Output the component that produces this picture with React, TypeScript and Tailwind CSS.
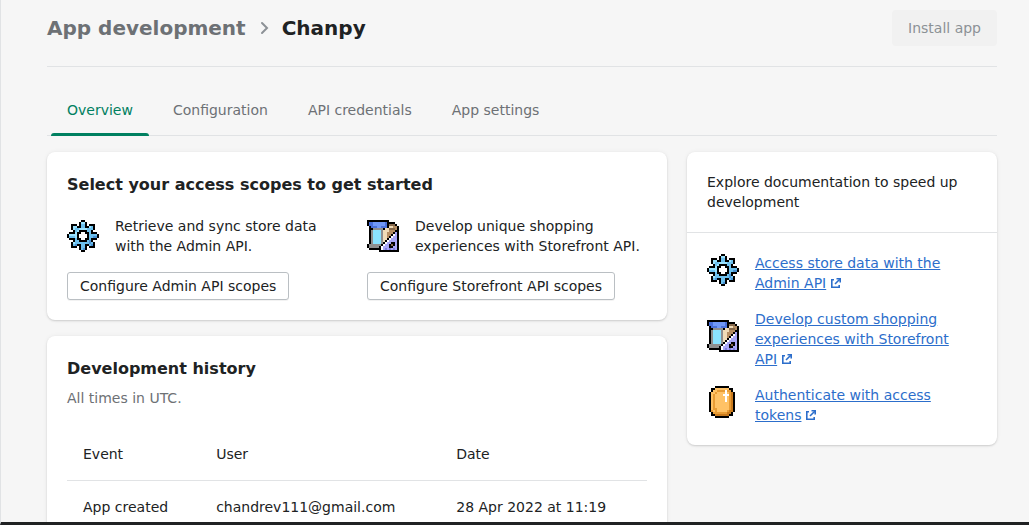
import React from 'react';

const GEAR = [
  '.......KK.......',
  '......KLLK......',
  '..KKK.KMMK.KKK..',
  '..KLLKKMMKKLMK..',
  '..KLMMLLLLMMMK..',
  '...KMLKKKKMMK...',
  '.KKKLKKWWKKMKKK.',
  'KLLLLKWWWWKMMMMK',
  'KMMMLKWWWWKMMDDK',
  '.KKKMKKWWKKMKKK.',
  '...KMMKKKKMDK...',
  '..KLMMMMMMMDMK..',
  '..KMDKKMMKKMDK..',
  '..KKK.KMMK.KKK..',
  '......KMDK......',
  '.......KK.......',
];

const STORE = [
  'KKKKKKKKKKK.....',
  'KBBVVVVVVBKKKK..',
  'KBBVVVVVVBKTTTK.',
  '.KBBBVVBBBKSSNNK',
  '.KKGGGGGKSSTTTNK',
  '.KGCCCCGSSSNNNKK',
  '.KGCCCCGSSNNNKPK',
  '.KGCCCCGSSNNKWPK',
  '.KGCCCCGSSNKWPPK',
  '.KGCCCCGSSKWPPPK',
  '.KGCCCCGSKWPPPPK',
  '.KGCCCCGKWPPKKPK',
  'KGGGGGGKWPPKTKPK',
  'KGGGGGKWPPPKKPPK',
  '.KKKKKKWPQPQPQPK',
  '......KKKKKKKKKK',
];

const COIN = [
  '....KKKKKKK.....',
  '..KKYYYYYYYKK...',
  '..KYYOOOOWOOK...',
  '.KYYOYYYYWYOAK..',
  '.KYOYYYYWWWOAK..',
  '.KYOYYYYYWYOAK..',
  '.KYOYYYYYWYOAK..',
  '.KYOYYYYYWYOAK..',
  '.KYOYYYYYYYOAK..',
  '.KYOYYYYYYYOAK..',
  '.KYOYYYYYYYOAK..',
  '.KYOOYYYYYYOAK..',
  '.KOYOYYYYYOAAK..',
  '..KOOOOOOOAAK...',
  '..KKAAAAAAAKK...',
  '....KKKKKKK.....',
];

const COLORS: Record<string, string> = {
  K: '#000000',
  W: '#ffffff',
  L: '#9be3ff',
  M: '#6cc0ee',
  D: '#4a92d4',
  B: '#4a70dc',
  V: '#7098f8',
  C: '#8ae3ff',
  G: '#8f8f8f',
  T: '#86694c',
  S: '#f0dcb8',
  N: '#b58e63',
  P: '#a8a6f6',
  Q: '#7f7ce0',
  Y: '#ffc266',
  O: '#e89c35',
  A: '#c97a1d',
};

function PixelIcon({ rows }: { rows: string[] }) {
  return (
    <svg viewBox="0 0 16 16" className="size-8 shrink-0" shapeRendering="crispEdges" aria-hidden="true">
      {rows.flatMap((row, y) =>
        row
          .split('')
          .map((c, x) => (c === '.' ? null : <rect key={`${x}-${y}`} x={x} y={y} width="1" height="1" fill={COLORS[c]} />)),
      )}
    </svg>
  );
}

function ExternalIcon() {
  return (
    <svg viewBox="0 0 12 12" className="ml-1 inline size-3 align-[-1px]" fill="none" stroke="currentColor" strokeWidth="1.6" aria-hidden="true">
      <path d="M4 2.8H1.8v7.4h7.4V8" />
      <path d="M5 7L9.8 2.2" />
      <path d="M6.5 1.8h3.7v3.7" />
    </svg>
  );
}

const tabs = ['Overview', 'Configuration', 'API credentials', 'App settings'];

const scopes = [
  { icon: GEAR, text: 'Retrieve and sync store data with the Admin API.', action: 'Configure Admin API scopes' },
  { icon: STORE, text: 'Develop unique shopping experiences with Storefront API.', action: 'Configure Storefront API scopes' },
];

const docs = [
  { icon: GEAR, text: 'Access store data with the Admin API' },
  { icon: STORE, text: 'Develop custom shopping experiences with Storefront API' },
  { icon: COIN, text: 'Authenticate with access tokens' },
];

const card = 'rounded-lg bg-white shadow-[0_0_5px_rgba(23,24,24,0.05),0_1px_2px_rgba(0,0,0,0.15)]';

export default function App() {
  return (
    <div className="h-screen overflow-hidden border-b-3 border-l border-b-[#202223] border-l-[#e1e3e5] bg-[#f6f6f6] pr-8 pl-[46px] font-['DejaVu_Sans',sans-serif] text-sm leading-5 text-[#202223]">
      <header className="flex items-center justify-between border-b border-[#e1e3e5] pt-[10px] pb-5">
        <h1 className="flex items-center text-xl leading-7 font-bold">
          <a href="#apps" className="text-[#6d7175]">App development</a>
          <svg viewBox="0 0 20 20" className="mx-2 size-5" fill="none" stroke="#8c9196" strokeWidth="2" strokeLinecap="round" aria-hidden="true">
            <path d="M8 5l5 5-5 5" />
          </svg>
          <span>Chanpy</span>
        </h1>
        <button disabled className="h-9 rounded bg-[#f1f1f1] px-4 text-[#8c9196]">Install app</button>
      </header>

      <nav className="mt-[18px] flex border-b border-[#e1e3e5] px-1" aria-label="App sections">
        {tabs.map((tab, i) => (
          <a
            key={tab}
            href={`#${tab.toLowerCase().replace(' ', '-')}`}
            aria-current={i === 0 ? 'page' : undefined}
            className={
              i === 0
                ? 'relative mr-2 px-4 pt-[15px] pb-[15px] text-[#008060] after:absolute after:inset-x-0 after:-bottom-px after:h-[3px] after:rounded-t after:bg-[#008060]'
                : 'mr-2 px-4 pt-[15px] pb-[15px] text-[#6d7175]'
            }
          >
            {tab}
          </a>
        ))}
      </nav>

      <main className="mt-4 grid grid-cols-[2fr_1fr] items-start gap-5">
        <div className="flex flex-col gap-4">
          <section className={`${card} p-5`}>
            <h2 className="text-base leading-[26px] font-bold">Select your access scopes to get started</h2>
            <div className="mt-[18px] grid grid-cols-2 gap-5">
              {scopes.map((s) => (
                <div key={s.action}>
                  <div className="flex items-center gap-4">
                    <PixelIcon rows={s.icon} />
                    <p>{s.text}</p>
                  </div>
                  <button className="mt-4 h-7 rounded-[3px] border border-[#babfc3] bg-white px-3 whitespace-nowrap shadow-[0_1px_0_rgba(0,0,0,0.05)]">
                    {s.action}
                  </button>
                </div>
              ))}
            </div>
          </section>

          <section className={`${card} p-5`}>
            <h2 className="text-base leading-[26px] font-bold">Development history</h2>
            <p className="mt-1.5 text-[#6d7175]">All times in UTC.</p>
            <table className="mt-5 w-full border-collapse text-left">
              <thead>
                <tr>
                  <th scope="col" className="p-4 font-normal">Event</th>
                  <th scope="col" className="p-4 font-normal">User</th>
                  <th scope="col" className="p-4 font-normal">Date</th>
                </tr>
              </thead>
              <tbody>
                <tr className="border-t border-[#e1e3e5]">
                  <td className="p-4">App created</td>
                  <td className="p-4">chandrev111@gmail.com</td>
                  <td className="p-4">28 Apr 2022 at 11:19</td>
                </tr>
              </tbody>
            </table>
          </section>
        </div>

        <aside className={card}>
          <p className="border-b border-[#e1e3e5] p-5">Explore documentation to speed up development</p>
          <ul className="flex flex-col gap-4 p-5">
            {docs.map((d) => (
              <li key={d.text} className="flex items-center gap-4">
                <div className="shrink-0 pb-1.5">
                  <PixelIcon rows={d.icon} />
                </div>
                <a href="#docs" className="pr-4 text-[#2c6ecb] underline">
                  {d.text}
                  <ExternalIcon />
                </a>
              </li>
            ))}
          </ul>
        </aside>
      </main>
    </div>
  );
}
